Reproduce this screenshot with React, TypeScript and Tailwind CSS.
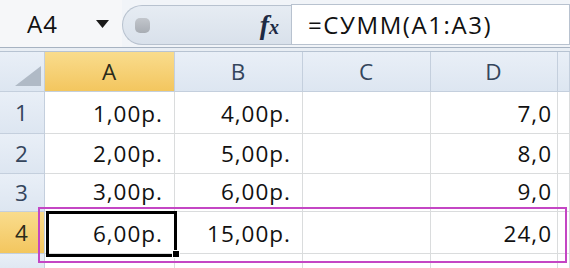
import { ReactNode } from 'react'

const COLS = ['A', 'B', 'C', 'D']

// widths in px, matching the screenshot
const colWidths = ['w-[45px]', 'w-[130px]', 'w-[128px]', 'w-[128px]', 'w-[127px]', 'w-[12px]']

const rows = [
  { n: '1', h: 'h-[42px]', cells: ['1,00р.', '4,00р.', '', '7,0'] },
  { n: '2', h: 'h-[40px]', cells: ['2,00р.', '5,00р.', '', '8,0'] },
  { n: '3', h: 'h-[38px]', cells: ['3,00р.', '6,00р.', '', '9,0'] },
  { n: '4', h: 'h-[42px]', cells: ['6,00р.', '15,00р.', '', '24,0'], active: true }
]

function HeaderCell({ children, selected, className = '' }: { children?: ReactNode; selected?: boolean; className?: string }) {
  return (
    <div
      className={`flex items-center justify-center border-r border-b border-[#c4cfdd] ${
        selected ? 'bg-gradient-to-b from-[#f9dc8c] to-[#f3c65e] text-[#2b2a1a]' : 'bg-gradient-to-b from-[#e9eff7] to-[#dde6f1] text-[#34455c]'
      } ${className}`}
    >
      {children}
    </div>
  )
}

function Cell({ value, className = '', currency }: { value: string; className?: string; currency?: boolean }) {
  return (
    <div
      className={`flex items-end justify-end pb-[2px] border-r border-b border-[#dadcdd] bg-white text-[#111] ${
        currency ? 'pr-[11px]' : 'pr-[5px]'
      } ${className}`}
    >
      {value}
    </div>
  )
}

export default function App() {
  return (
    <div
      className="relative w-[570px] h-[268px] overflow-hidden bg-white"
      style={{ fontFamily: '"Open Sans", "Noto Sans", sans-serif' }}
    >
      {/* name box + formula bar */}
      <div className="flex h-[48px] bg-[#f1f4f8] border-b border-[#a7b3c2]">
        <div className="flex items-center w-[122px] pl-[27px] bg-[#f6f7f9]">
          <span className="text-[24px] text-[#111] tracking-[1px]">A4</span>
          <svg className="ml-[38px]" width="13" height="8" viewBox="0 0 13 8">
            <path d="M0 0 L13 0 L6.5 8 Z" fill="#1a1a1a" />
          </svg>
        </div>
        <div className="flex items-center justify-between w-[169px] mt-[5px] mb-[2px] pl-[12px] pr-[12px] rounded-l-[20px] border border-r-0 border-[#b8c2cf] bg-gradient-to-b from-[#e6ecf3] to-[#d9e1eb]">
          <div className="w-[15px] h-[15px] rounded-[5px] bg-gradient-to-b from-[#c2c6cc] to-[#a8adb4]" />
          <span
            className="text-[28px] leading-none font-bold italic text-[#1d2a44]"
            style={{ fontFamily: '"Liberation Serif", serif' }}
          >
            f<span className="text-[20px]">x</span>
          </span>
        </div>
        <div className="flex items-center flex-1 mt-[4px] mb-[2px] pl-[16px] bg-white border border-[#b8c2cf]">
          <span className="text-[24px] text-[#111] tracking-[1.6px]">=СУММ(A1:A3)</span>
        </div>
      </div>

      {/* gap strip */}
      <div className="h-[4px] bg-[#e9eef4] border-b border-[#b7c3d2]" />

      {/* sheet grid */}
      <div className="flex flex-col text-[22.5px] tracking-[1px]">
        <div className="flex h-[40px]">
          <HeaderCell className={`${colWidths[0]} relative`}>
            <svg className="absolute right-[3px] bottom-[5px]" width="26" height="20" viewBox="0 0 26 20">
              <path d="M26 0 L26 20 L0 20 Z" fill="#b0bac6" />
            </svg>
          </HeaderCell>
          {COLS.map((c, i) => (
            <HeaderCell key={c} selected={c === 'A'} className={colWidths[i + 1]}>
              {c}
            </HeaderCell>
          ))}
          <HeaderCell className={colWidths[5]} />
        </div>
        {rows.map(r => (
          <div key={r.n} className={`flex ${r.h}`}>
            <HeaderCell selected={r.active} className={colWidths[0]}>
              {r.n}
            </HeaderCell>
            {r.cells.map((v, i) => (
              <Cell key={i} value={v} currency={i < 2} className={colWidths[i + 1]} />
            ))}
            <Cell value="" className={colWidths[5]} />
          </div>
        ))}
        <div className="flex h-[20px]">
          <HeaderCell className={colWidths[0]} />
          {colWidths.slice(1).map((w, i) => (
            <Cell key={i} value="" className={w} />
          ))}
        </div>
      </div>

      {/* active cell outline + fill handle */}
      <div className="absolute left-[46px] top-[211px] w-[131px] h-[46px] border-[3px] border-black" />
      <div className="absolute left-[172px] top-[250px] w-[8px] h-[8px] bg-black border border-white" />

      {/* magenta highlight around row 4 */}
      <div className="absolute left-[38px] top-[207px] w-[529px] h-[56px] border-2 border-[#c446c4]" />
    </div>
  )
}
